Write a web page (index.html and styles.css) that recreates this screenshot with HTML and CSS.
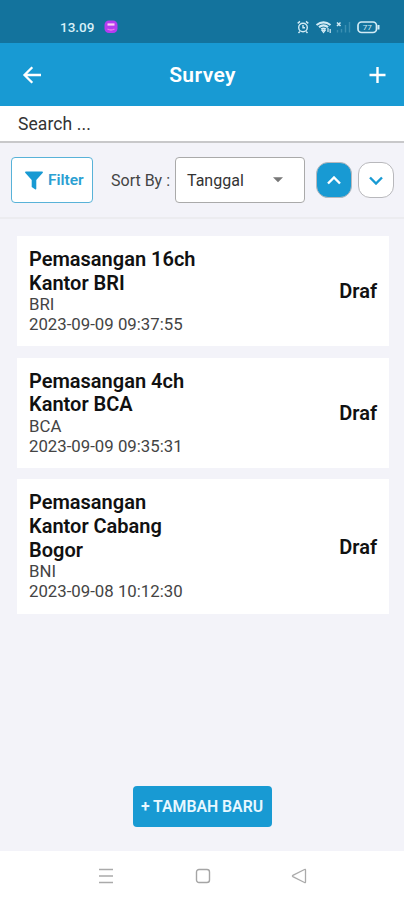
FILE: index.html
```html
<!DOCTYPE html>
<html lang="id">
<head>
<meta charset="utf-8">
<title>Survey</title>
<link rel="stylesheet" href="styles.css">
</head>
<body>
<div class="status">
  <span class="clock">13.09</span>
  <span class="app-badge"><svg width="14" height="14" viewBox="0 0 14 14"><rect x=".5" y=".5" width="13" height="12.5" rx="4.500" fill="#b43cf0"/><path d="M3.5 4.5h7" stroke="#ffd0f4" stroke-width="2.2"/><path d="M3.5 9q3.5 2 7 0" stroke="#f077ee" stroke-width="1.3" fill="none"/></svg></span>
  <svg class="tray" width="84" height="14" viewBox="0 0 84 14" fill="none" stroke="#d2ebf5" stroke-width="1.4">
    <circle cx="6" cy="7.5" r="4.3"/><path d="M6 5v2.7h2M.7 3.4 3 1.4M11.300 3.400 9 1.400M2.800 11.500 1.500 13M9.200 11.500l1.300 1.500"/>
    <path d="M19.500 5q7-5.200 14 0M22 7.200q4.500-3.500 9 0M24.300 9.400q2.200-1.800 4.400 0" stroke-width="2.100"/><path d="m25 10.500 1.500 2 1.500-2zM31 8v4M33.200 9v4" stroke-width="1.200"/>
    <path d="m40 2.500 3.500 3.500M43.500 2.500 40 6" stroke-width="1.500"/>
    <path d="M40.500 10v2.500M44.500 9v3.500M48.500 5v7.500M52.500 2v10.500" stroke="#3a8fb2" stroke-width="1.400"/>
    <rect x="61" y="2" width="18.500" height="10.500" rx="3.500" stroke-width="1.700"/><path d="M81.500 5v4.500" stroke-width="2"/>
    <text class="charge" x="70.300" y="10" text-anchor="middle">77</text>
  </svg>
</div>
<header class="header">
  <svg width="20" height="20" viewBox="0 0 20 20" fill="none" stroke="#fff" stroke-width="2.300"><path d="M19 10H2.500M10.300 2.200 2.500 10l7.800 7.800"/></svg>
  <h1>Survey</h1>
  <svg width="20" height="20" viewBox="0 0 20 20" stroke="#fff" stroke-width="2.400"><path d="M10.500 2v16M2.500 10h16"/></svg>
</header>
<div class="search"><span>Search ...</span></div>
<div class="toolbar">
  <div class="filter"><svg width="18" height="19" viewBox="0 0 18 19"><path d="M.8.500h16.400q1.200.2.400 1.500L11.300 9v8.800q-.2 1-1.300.5L6.700 16V9L.4 2Q-.4.700.8.500z" fill="#189ad3"/></svg><span>Filter</span></div>
  <span class="sort-label">Sort By :</span>
  <div class="select"><span>Tanggal</span><svg width="10" height="6" viewBox="0 0 10 6"><path d="M0 .3h10L5 5.300z" fill="#777"/></svg></div>
  <div class="order order-up"><svg width="14" height="9" viewBox="0 0 14 9" fill="none" stroke="#fff" stroke-width="2.400"><path d="m1 7.500 6-6 6 6"/></svg></div>
  <div class="order order-down"><svg width="14" height="9" viewBox="0 0 14 9" fill="none" stroke="#189ad3" stroke-width="2.400"><path d="m1 1.500 6 6 6-6"/></svg></div>
</div>
<main class="list">
  <article class="card"><div><h2>Pemasangan 16ch<br>Kantor BRI</h2><p>BRI</p><p>2023-09-09 09:37:55</p></div><strong>Draf</strong></article>
  <article class="card"><div><h2>Pemasangan 4ch<br>Kantor BCA</h2><p>BCA</p><p>2023-09-09 09:35:31</p></div><strong>Draf</strong></article>
  <article class="card"><div><h2>Pemasangan<br>Kantor Cabang<br>Bogor</h2><p>BNI</p><p>2023-09-08 10:12:30</p></div><strong>Draf</strong></article>
</main>
<div class="action"><div class="add"><span>+ TAMBAH BARU</span></div></div>
<nav class="system-nav">
  <svg width="16" height="16" viewBox="0 0 16 16" stroke="#aaa" stroke-width="1.400"><path d="M1 1.500h14M1 8h14M1 14.500h14"/></svg>
  <svg width="16" height="16" viewBox="0 0 16 16" fill="none" stroke="#a5a5a5" stroke-width="1.400"><rect x="1.500" y="1.500" width="13" height="13" rx="2.500"/></svg>
  <svg width="16" height="16" viewBox="0 0 16 16" fill="none" stroke="#aaa" stroke-width="1.300" stroke-linejoin="round"><path d="M14.500 2v12q0 1-1 .5L1.800 8.600q-.8-.6 0-1.200L13.500 1.500q1-.5 1 .5z"/></svg>
</nav>
</body>
</html>
```
FILE: styles.css
```css
* { box-sizing: border-box; }
body {
  margin: 0;
  width: 404px;
  height: 900px;
  display: flex;
  flex-direction: column;
  overflow: hidden;
  background: #f3f3f9;
  color: #111;
  font-family: Roboto, sans-serif;
}
svg { display: block; flex: none; }
h1, h2, p { margin: 0; }
span, strong, h1, h2, p { white-space: nowrap; }
.status {
  height: 43px;
  flex: none;
  display: flex;
  align-items: center;
  padding: 10px 23px 0 60px;
  background: #13739d;
  color: #d9f0f8;
}
.clock { font-size: 13.5px; font-weight: 500; }
.app-badge { margin-left: 10px; }
.tray { margin-left: auto; }
.charge { font-size: 8px; fill: #d2ebf5; stroke: none; }
.header {
  height: 63px;
  flex: none;
  display: flex;
  align-items: center;
  justify-content: space-between;
  padding: 1px 17px 0 22px;
  background: #189ad3;
  color: #fff;
}
h1 { position: relative; left: -2px; font-size: 21px; font-weight: 600; letter-spacing: .4px; }
.search {
  height: 37px;
  flex: none;
  display: flex;
  align-items: center;
  padding-left: 18px;
  background: #fff;
  border-bottom: 2px solid #c8c8ca;
  font-size: 17.5px;
  letter-spacing: .1px;
  color: #333;
}
.toolbar {
  height: 76px;
  flex: none;
  display: flex;
  align-items: center;
  padding: 0 10px 0 11px;
  border-bottom: 2px solid #ececf0;
}
.filter {
  width: 82px;
  height: 46px;
  display: flex;
  align-items: center;
  gap: 5px;
  padding-left: 13px;
  background: #fff;
  border: 1px solid #58b2d8;
  border-radius: 4px;
  color: #2ba0d2;
  font-size: 15.5px;
  font-weight: 600;
}
.sort-label { width: 64px; margin-left: 18px; font-size: 16px; color: #444; }
.select {
  width: 130px;
  height: 46px;
  display: flex;
  align-items: center;
  justify-content: space-between;
  padding: 0 21px 0 11px;
  background: #fff;
  border: 1px solid #aaa;
  border-radius: 4px;
  font-size: 16px;
  color: #333;
}
.order {
  width: 36px;
  height: 36px;
  display: flex;
  align-items: center;
  justify-content: center;
  border: 1px solid #b8b8bc;
  border-radius: 12px;
}
.order-up { margin-left: 11px; background: #189ad3; }
.order-down { margin-left: auto; background: #fff; }
.list {
  display: flex;
  flex-direction: column;
  gap: 11.3px;
  padding: 17px 15px 0 17px;
}
.card {
  display: flex;
  align-items: center;
  justify-content: space-between;
  padding: 11.8px 12px 12px;
  background: #fff;
}
h2, strong { font-size: 20px; font-weight: 600; line-height: 23.7px; color: #111; }
h2 { margin-bottom: -1.4px; }
strong { padding-top: 2px; }
p { font-size: 16.8px; line-height: 20.3px; color: #444; }
.action { margin-top: auto; padding-bottom: 24px; display: flex; justify-content: center; }
.add {
  width: 139px;
  height: 41px;
  display: flex;
  align-items: center;
  justify-content: center;
  background: #189ad3;
  border-radius: 4px;
  color: #e8f8ff;
  font-size: 15.8px;
  font-weight: 600;
}
.system-nav {
  height: 49px;
  flex: none;
  display: flex;
  align-items: center;
  justify-content: space-between;
  padding: 0 97px 0 98px;
  background: #fff;
}
```
